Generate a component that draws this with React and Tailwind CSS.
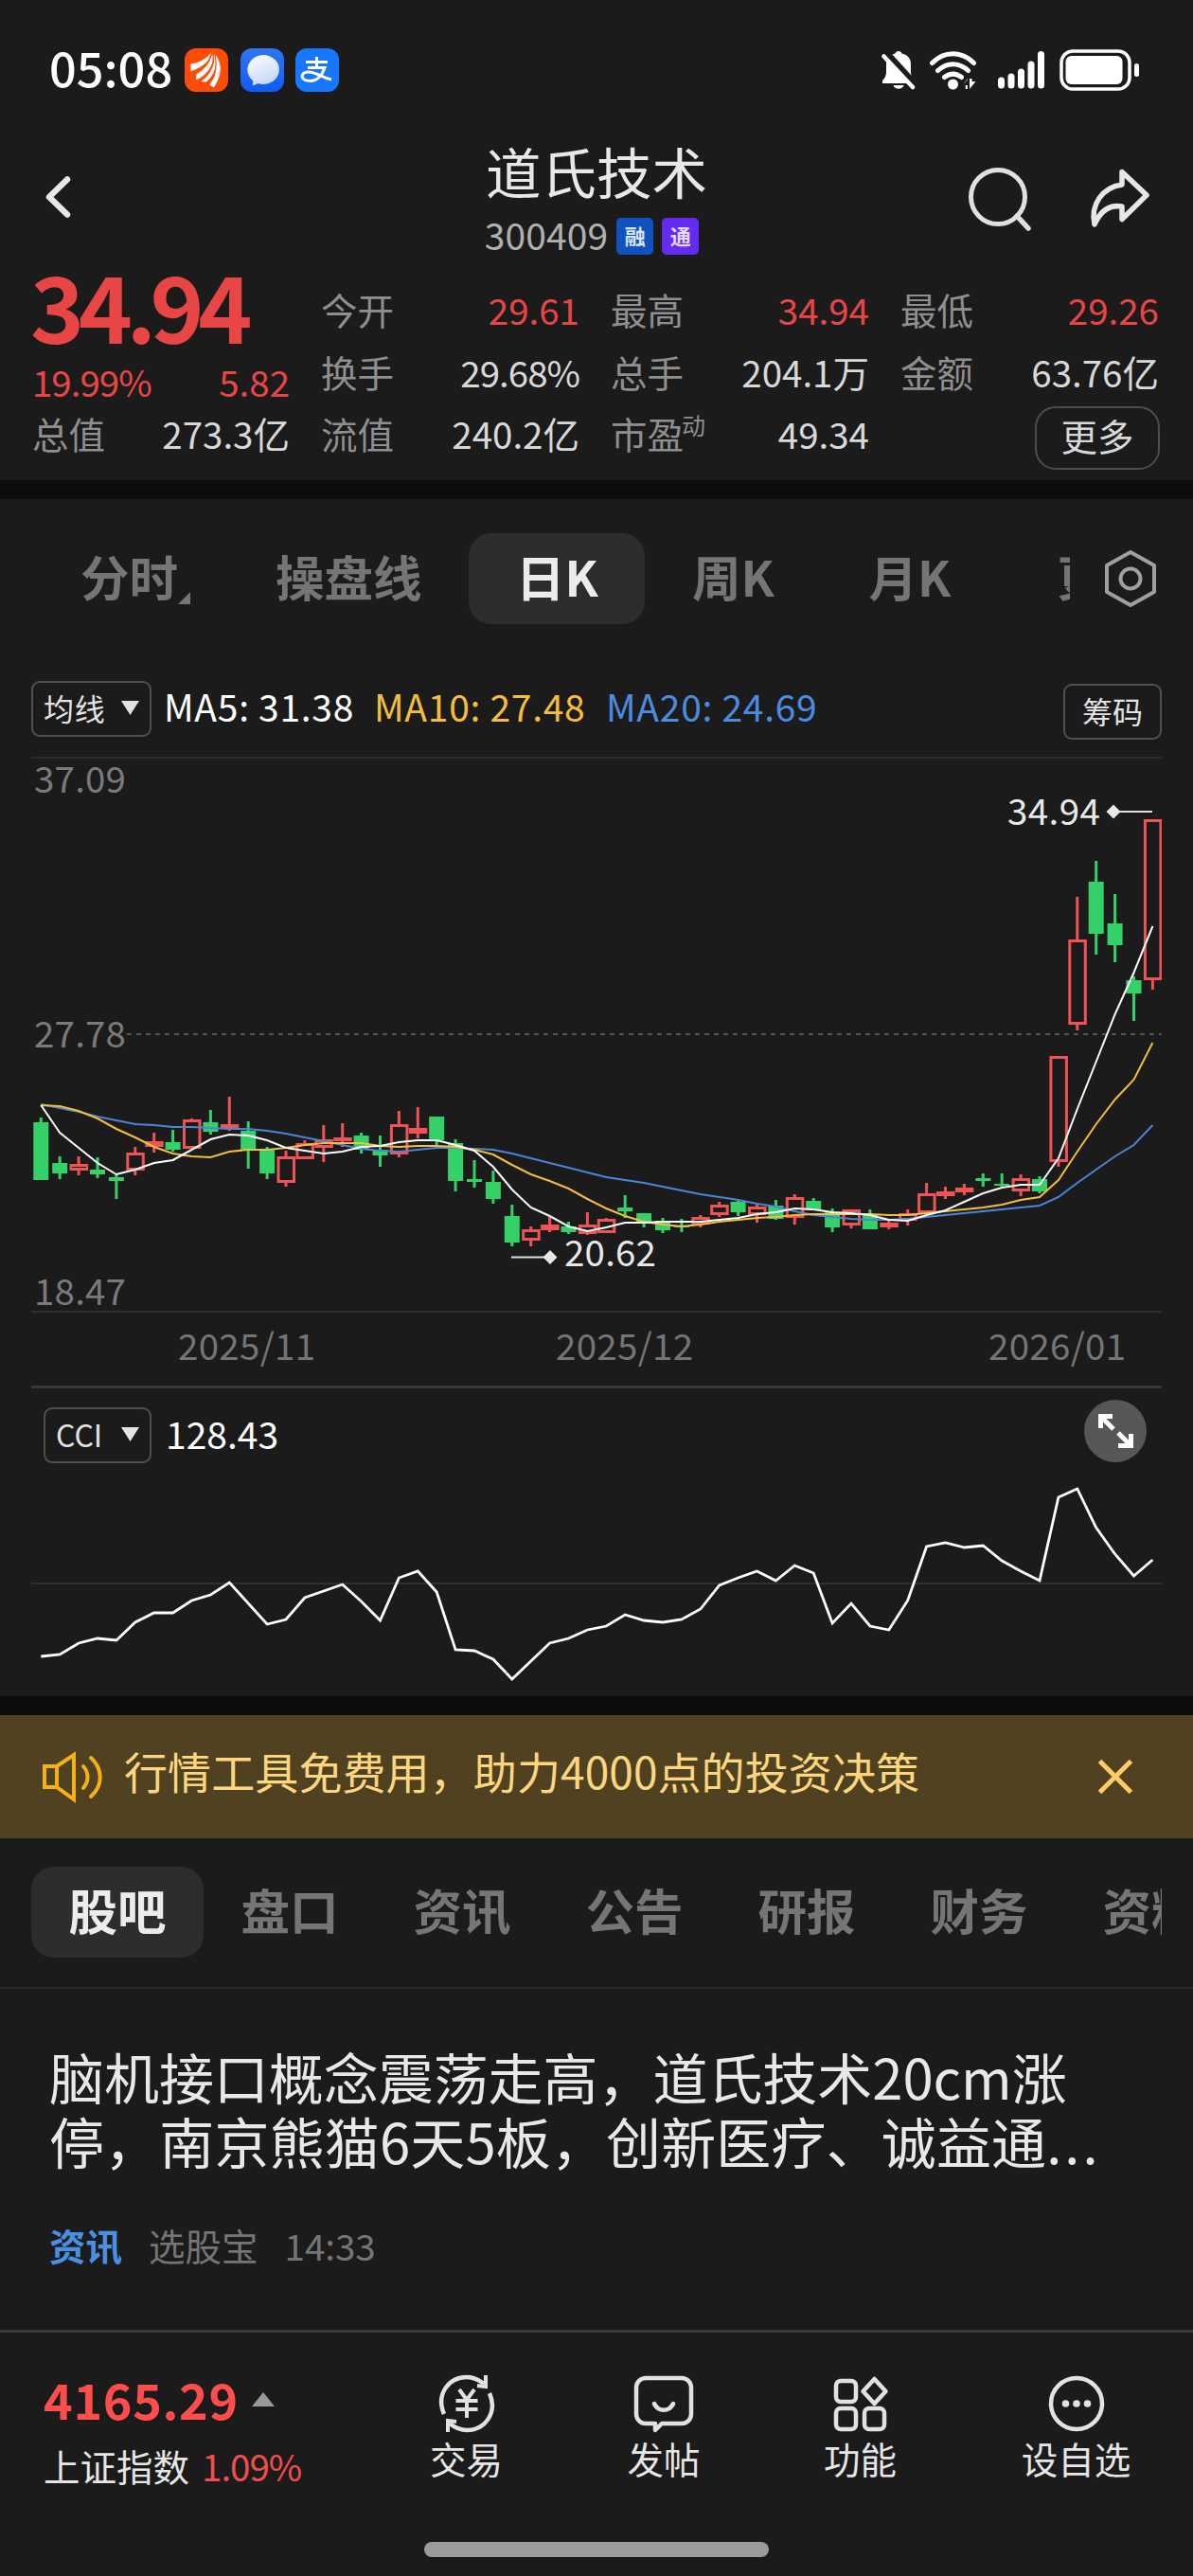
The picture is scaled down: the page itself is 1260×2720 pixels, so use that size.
import React, { useState } from "react";

// [high, body top, body bottom, low, rising]
const CANDLES = [
  [380, 385, 446, 446, 0], [421, 428, 439, 445, 0], [421, 429, 436, 441, 1], [422, 435, 440, 444, 0],
  [440, 443, 447, 466, 0], [411, 417, 436, 441, 1], [396, 405, 411, 417, 1], [393, 406, 414, 416, 0],
  [381, 382, 413, 413, 1], [372, 385, 395, 398, 0], [358, 387, 391, 394, 1], [384, 394, 414, 434, 0],
  [411, 414, 439, 445, 0], [415, 421, 449, 453, 1], [404, 407, 424, 424, 1], [388, 403, 412, 427, 1],
  [386, 401, 405, 411, 1], [396, 399, 414, 418, 0], [399, 414, 420, 432, 0], [373, 387, 419, 422, 1],
  [369, 391, 397, 402, 1], [379, 379, 404, 409, 0], [403, 407, 447, 458, 0], [425, 445, 448, 454, 0],
  [436, 448, 466, 471, 0], [472, 484, 512, 516, 0], [495, 498, 510, 516, 1], [484, 493, 499, 501, 1],
  [490, 495, 501, 503, 0], [480, 493, 503, 504, 1], [486, 487, 502, 502, 1], [462, 475, 479, 486, 0],
  [481, 481, 492, 496, 0], [486, 489, 499, 502, 0], [487, 494, 496, 501, 0], [483, 485, 493, 496, 1],
  [469, 472, 483, 485, 1], [468, 469, 480, 484, 0], [472, 474, 483, 491, 1], [467, 473, 487, 488, 0],
  [461, 464, 486, 493, 1], [465, 468, 478, 478, 0], [476, 480, 496, 501, 0], [477, 477, 494, 497, 1],
  [477, 483, 498, 498, 0], [489, 491, 496, 498, 1], [477, 481, 489, 494, 1], [449, 460, 481, 481, 1],
  [453, 458, 463, 466, 1], [450, 454, 459, 462, 1], [439, 444, 447, 453, 0], [439, 450, 452, 454, 0],
  [440, 444, 458, 463, 1], [442, 445, 458, 460, 0], [315, 315, 427, 432, 1], [147, 192, 282, 288, 1],
  [109, 131, 186, 208, 0], [144, 175, 198, 216, 0], [231, 235, 249, 278, 0], [65, 65, 235, 245, 1],
];

const MA5 = [367, 396, 412, 428, 440, 435, 428, 425, 414, 403, 398, 399, 404, 412, 415, 418, 416, 411, 410, 406, 404, 404, 409, 415, 432, 456, 475, 484, 495, 500, 496, 491, 491, 490, 490, 490, 488, 486, 482, 480, 476, 477, 480, 481, 483, 488, 489, 483, 478, 469, 460, 454, 451, 451, 423, 371, 321, 271, 227, 178];
const MA10 = [367, 368, 373, 381, 392, 401, 411, 418, 421, 422, 416, 414, 414, 412, 409, 407, 407, 407, 410, 411, 410, 410, 411, 414, 419, 430, 440, 447, 455, 466, 476, 484, 490, 493, 495, 493, 490, 488, 486, 485, 483, 482, 482, 482, 482, 483, 483, 481, 479, 477, 475, 472, 467, 464, 446, 416, 387, 361, 340, 301];
const MA20 = [366, 370, 374, 379, 383, 387, 388, 390, 390, 391, 392, 392, 394, 397, 401, 405, 409, 413, 415, 416, 414, 412, 412, 413, 414, 418, 423, 428, 433, 438, 443, 446, 449, 453, 457, 461, 464, 467, 471, 474, 479, 483, 485, 487, 488, 488, 487, 485, 483, 481, 479, 477, 475, 473, 464, 449, 435, 421, 409, 388];
const CCI = [189, 187, 175, 170, 172, 153, 143, 143, 130, 124, 111, 133, 155, 150, 127, 120, 113, 131, 151, 106, 99, 121, 182, 183, 192, 213, 194, 175, 170, 161, 157, 145, 151, 153, 150, 139, 114, 106, 99, 109, 93, 101, 154, 133, 157, 161, 130, 73, 69, 74, 72, 88, 99, 109, 21, 12, 53, 81, 104, 87];

const QUOTES = [
  [["今开", "29.61", true], ["换手", "29.68%"], ["流值", "240.2亿"]],
  [["最高", "34.94", true], ["总手", "204.1万"], ["市盈", "49.34"]],
  [["最低", "29.26", true], ["金额", "63.76亿"]],
];

const INFO_TABS = ["股吧", "盘口", "资讯", "公告", "研报", "财务", "资料"];

const xAt = (i) => 10.3 + i * 19.9;
const toPoints = (values) => values.map((v, i) => `${xAt(i).toFixed(1)},${v}`).join(" ");

function StatusBar() {
  return (
    <div className="h-[147px] pl-[52px] pr-[55px] flex items-center justify-between">
      <div className="flex items-center">
        <span className="w-[143px] text-[50.500px] leading-none font-medium text-white pb-[6px]">05:08</span>
        <div className="flex gap-[12.5px]">
          <svg className="w-[46px] h-[46px]" viewBox="0 0 46 46">
            <rect width="46" height="46" rx="12" fill="#fd4c07" />
            <g fill="#fff" stroke="#fd4c07" strokeWidth="1">
              <path d="M6 25V16C16 15 22 11 28 4c0 8-7 16-22 21z" />
              <path d="M12 34c-1-2-.5-4 0-7C21 22 27 15 29 4c4 11-3 24-17 30z" />
              <path d="M23 36c-2 0-4 0-6-1C28 27 32 17 30.500 4c6 11 2 24-7.500 32z" />
              <path d="M26 38c8-9 8-21 6-33 9 12 8 23-1 37-1-1-4-2-5-4z" />
            </g>
          </svg>
          <svg className="w-[46px] h-[46px]" viewBox="0 0 46 46">
            <defs>
              <linearGradient id="msgBg" x1="0" y1="0" x2="0" y2="1">
                <stop offset="0" stopColor="#2f76f3" />
                <stop offset="1" stopColor="#0f5cf5" />
              </linearGradient>
              <linearGradient id="msgBubble" x1="0" y1="0" x2="0.5" y2="1">
                <stop offset="0" stopColor="#fff" />
                <stop offset="1" stopColor="#c8d8fa" />
              </linearGradient>
            </defs>
            <rect width="46" height="46" rx="12" fill="url(#msgBg)" />
            <path d="M23 7a17 15.500 0 1 1-5 30c-1 1-3 2-5.500 2 .8-1.500 1-3 .5-5A17 15.500 0 0 1 23 7z" fill="url(#msgBubble)" />
          </svg>
          <svg className="w-[46px] h-[46px]" viewBox="0 0 46 46" fill="none" stroke="#fff" strokeWidth="3">
            <rect width="46" height="46" rx="12" fill="#1777ff" stroke="none" />
            <path d="M11 14.500h23M22.500 9v11M13 20.500h18c-3 8-8 14-15 14-12 0-11-10-2-9.500 9 .5 14 6 24 8" />
          </svg>
        </div>
      </div>
      <div className="flex items-center">
        <svg className="w-[36px] h-[42px]" viewBox="0 0 36 42">
          <path d="M18 1c2 0 3 1 3.500 2.500C28 5 31 9 31 15v7c0 5 1 7 4 10v3H1v-3c3-3 4-5 4-10v-7c0-6 3-10 9.500-11.500C15 2 16 1 18 1z" fill="#fff" />
          <path d="M12.500 37h11c-1 5-10 5-11 0z" fill="#fff" />
          <path d="M6 3l31 34" stroke="#1b1b1b" strokeWidth="6" />
          <path d="M2.500 6.500L33 39" stroke="#fff" strokeWidth="4.500" strokeLinecap="round" />
        </svg>
        <svg className="ml-[14px] w-[52px] h-[42px]" viewBox="0 0 52 42" fill="none" stroke="#fff" strokeWidth="5" strokeLinecap="round">
          <path d="M3.500 13.500c13-13 31-13 44 0M9.500 21.500c10-9 22-9 32 0M16.500 28.500c6-4.500 12-4.500 18 0" />
          <circle cx="25.500" cy="36" r="5.500" fill="#fff" stroke="none" />
          <path d="M36 37h4.800V30zM36 37l4.800-6v10h-2v-4zM43 30v11l6.500-8h-4v-3z" fill="#fff" stroke="none" />
        </svg>
        <svg className="ml-[21px] w-[50px] h-[42px]" viewBox="0 0 50 42" stroke="#fff" strokeWidth="7" strokeLinecap="round">
          <path d="M3.500 32v5M14 28v9M24.500 23v14M35 15v22M45.500 4.500v32.500" />
        </svg>
        <svg className="ml-[15px] w-[86px] h-[44px]" viewBox="0 0 86 44">
          <rect x="2" y="2" width="72" height="40" rx="12" fill="none" stroke="#fff" strokeWidth="3.500" />
          <rect x="6.500" y="7" width="60" height="30" rx="6" fill="#fff" />
          <rect x="79" y="15" width="5" height="14" rx="2.500" fill="#fff" />
        </svg>
      </div>
    </div>
  );
}

function Header() {
  return (
    <div className="h-[133px] px-[46px] flex justify-between">
      <div className="w-[200px] pt-[37px]">
        <svg className="w-[30px] h-[48px]" viewBox="0 0 30 48" fill="none" stroke="#e8e8e8" strokeWidth="6.500" strokeLinecap="round" strokeLinejoin="round">
          <path d="M25 5.500L6 24l19 18.500" />
        </svg>
      </div>
      <div className="flex flex-col items-center">
        <h1 className="text-[58.500px] leading-[66px] text-[#e8e8e8]">道氏技术</h1>
        <div className="mt-[11px] pr-[10px] flex items-center text-[#b0b0b0]">
          <span className="text-[39px] leading-[44px] mr-[9px] tracking-[0.100px]">300409</span>
          <span className="mt-[6px] mr-[9px] w-[39px] h-[39px] rounded-[5px] bg-[#1052bf] text-[#dbe8ff] text-[22px] leading-[36px] font-bold text-center">融</span>
          <span className="mt-[6px] w-[39px] h-[39px] rounded-[5px] bg-[#632cf0] text-[#e3d9ff] text-[22px] leading-[36px] font-bold text-center">通</span>
        </div>
      </div>
      <div className="w-[200px] pt-[28px] flex justify-end gap-[59px]">
        <svg className="w-[70px] h-[70px] -ml-[1px]" viewBox="0 0 70 70" fill="none" stroke="#e0e0e0" strokeWidth="5">
          <circle cx="34" cy="33" r="28.500" />
          <path d="M54 53l12 13" strokeWidth="5.500" strokeLinecap="round" />
        </svg>
        <svg className="-mr-[1px] w-[66px] h-[70px]" viewBox="0 0 66 70" fill="none" stroke="#e6e6e6" strokeWidth="5.500" strokeLinejoin="round">
          <path d="M36 6.500l26 24.500-26 25.500V43C23 41 13 48 7 62c-4.500-21 8-39 29-42z" />
        </svg>
      </div>
    </div>
  );
}

function QuotePanel() {
  return (
    <div className="h-[227px] pl-[34px] flex gap-[33px] text-[38.500px] leading-none text-[#d8d8d8]">
      <div className="w-[272px] flex flex-col text-[#e84645]">
        <div className="h-[95px] -ml-[2px] text-[97px] leading-[82px] font-bold tracking-[-6.500px]">34.94</div>
        <div className="h-[49px] flex items-center justify-between pt-[6px]">
          <span className="tracking-[-1px]">19.99%</span>
          <span>5.82</span>
        </div>
        <div className="h-[66px] flex items-center justify-between text-[#d8d8d8]">
          <span className="text-[#8f8f8f]">总值</span>
          <span>273.3亿</span>
        </div>
      </div>
      {QUOTES.map((rows, i) => (
        <div key={i} className="w-[273px] pt-[14px]">
          {rows.map(([label, value, up]) => (
            <div key={label} className="h-[65.300px] flex items-center justify-between">
              <span className="text-[#8f8f8f] flex">
                {label}
                {label === "市盈" && <sup className="text-[25px] top-0 -ml-[2px] leading-[20px]">动</sup>}
              </span>
              <span className={up ? "text-[#e84645]" : value.endsWith("%") ? "tracking-[-1px]" : ""}>{value}</span>
            </div>
          ))}
          {i === 2 && (
            <div className="flex justify-end pt-[4px] -mr-[1px]">
              <button className="w-[132px] h-[67px] rounded-[22px] border-2 border-[#4d4d4d] pb-[6px]">更多</button>
            </div>
          )}
        </div>
      ))}
    </div>
  );
}

function PeriodTabs() {
  return (
    <div className="pt-[36px] flex items-center">
      <div className="w-[1130px] pl-[36px] flex overflow-hidden whitespace-nowrap text-[51.500px] leading-[90px] font-bold text-[#757575]">
        <div className="pl-[49px] pr-[52px] flex shrink-0">
          分时
          <svg className="w-[13px] h-[13px] -mr-[13px] mt-[62px]" viewBox="0 0 13 13" fill="#757575">
            <path d="M13 0v13H0z" />
          </svg>
        </div>
        <div className="pl-[51px] pr-[49px] shrink-0">操盘线</div>
        <div className="w-[186px] h-[96px] pl-[2px] text-center shrink-0 rounded-[24px] bg-[#2d2d2d] text-[#ececec]">日K</div>
        <div className="w-[187px] pl-[1px] text-center shrink-0">周K</div>
        <div className="w-[187px] text-center shrink-0">月K</div>
        <div className="pl-[62px] shrink-0">更多</div>
      </div>
      <svg className="ml-[35px] w-[58px] h-[62px]" viewBox="0 0 58 62" fill="none" stroke="#a0a0a0" strokeWidth="4">
        <path d="M29 3l25 14v28L29 59 4 45V17z" strokeLinejoin="round" />
        <circle cx="29" cy="31" r="10.500" />
      </svg>
    </div>
  );
}

function Dropdown({ label }) {
  return (
    <button className="h-[59px] px-[11px] rounded-[9px] border-2 border-[#505050] flex items-center text-[32px] leading-none text-[#e3e3e3]">
      <span className="pb-[4px]">{label}</span>
      <svg className="ml-auto mb-[2px] w-[19px] h-[15px]" viewBox="0 0 19 15" fill="#e3e3e3">
        <path d="M0 0h19L9.500 15z" />
      </svg>
    </button>
  );
}

function KLineChart() {
  return (
    <div className="mx-[33px] mt-[18px] h-[585px] relative border-t-2 border-[#2c2c2c] text-[38.500px] leading-none tracking-[0.200px] text-[#7a7a7a]">
      <svg className="w-[1194px] h-[584px] -mt-[1px] block" viewBox="0 0 1194 584" fill="none">
        <path d="M101 292h1093" stroke="#555" strokeWidth="2" strokeDasharray="5 5" />
        {CANDLES.map(([high, top, bottom, low, rising], i) => {
          const x = xAt(i);
          if (rising) {
            return (
              <g key={i} stroke="#f05355" strokeWidth="3">
                <path d={`M${x} ${high}V${top}M${x} ${bottom}V${low}`} />
                <rect x={x - 8} y={top + 1.5} width="16.500" height={Math.max(bottom - top - 3, 1)} />
              </g>
            );
          }
          return (
            <g key={i} fill="#33d168">
              <rect x={x - 1.5} y={high} width="3" height={low - high} />
              <rect x={x - 8} y={top} width="16" height={bottom - top} />
            </g>
          );
        })}
        <polyline points={toPoints(MA20)} stroke="#4a86d8" strokeWidth="2" />
        <polyline points={toPoints(MA10)} stroke="#f3bd3d" strokeWidth="2" />
        <polyline points={toPoints(MA5)} stroke="#fff" strokeWidth="2" />
        <path d="M507 527.500h38M1147 57h37" stroke="#e0e0e0" strokeWidth="2" />
        <path d="M548 520l7.500 7.500-7.500 7.500-7.500-7.500zM1143 49.500l7.500 7.500-7.500 7.500-7.500-7.500z" fill="#e8e8e8" />
      </svg>
      {/* axis and callout labels */}
      <span className="absolute left-[3px] top-[0px]">37.09</span>
      <span className="absolute left-[3px] top-[269px] bg-[#1b1b1b]">27.78</span>
      <span className="absolute left-[3px] bottom-[4px]">18.47</span>
      <span className="absolute left-[1031px] top-[34px] tracking-[0.400px] text-[#e8e8e8]">34.94</span>
      <span className="absolute left-[563px] top-[500px] text-[#e8e8e8]">20.62</span>
    </div>
  );
}

function CciChart() {
  return (
    <div className="mx-[33px] h-[328px] border-t-[3px] border-[#383838]">
      <div className="h-[94px] flex pl-[13px] pr-[16px]">
        <div className="mt-[20px] w-[114px] grid h-[59px]">
          <Dropdown label="CCI" />
        </div>
        <span className="ml-[15px] mt-[28px] text-[39px] leading-none text-white">128.43</span>
        <div className="ml-auto mt-[12px] w-[66px] h-[66px] rounded-full bg-[#575757]">
          <svg className="w-[66px] h-[66px]" viewBox="0 0 66 66" fill="none" stroke="#fff" strokeWidth="5">
            <path d="M17.500 30V17.500H30M18 18l13 13M49.500 36v12.500H36M49 48L36 35" />
          </svg>
        </div>
      </div>
      <svg className="w-[1194px] h-[229px] block" viewBox="0 0 1194 229" fill="none">
        <path d="M0 112h1194" stroke="#2e2e2e" strokeWidth="2" />
        <polyline points={toPoints(CCI)} stroke="#fff" strokeWidth="2.800" />
      </svg>
    </div>
  );
}

function Banner({ onClose }) {
  return (
    <div className="h-[130px] bg-[#504220] pl-[44px] pr-[61px] flex items-center">
      <svg className="w-[65px] h-[56px]" viewBox="0 0 65 56" fill="none" stroke="#f7b114" strokeWidth="4">
        <path d="M3 17h13L34 5v47L16 39H3zM16 17v22" />
        <path d="M44 17c6 7 6 16 0 23M52 8c13 12 13 29 0 41" strokeLinecap="round" />
      </svg>
      <span className="ml-[22px] pb-[14px] text-[46px] leading-none tracking-[0.100px] text-[#fcd780]">行情工具免费用，助力4000点的投资决策</span>
      <button className="ml-auto" onClick={onClose}>
        <svg className="w-[42px] h-[42px]" viewBox="0 0 42 42" stroke="#ffcc66" strokeWidth="5">
          <path d="M4.500 4.500l33 33M37.500 4.500l-33 33" />
        </svg>
      </button>
    </div>
  );
}

function BottomBar() {
  return (
    <div className="h-[260px] border-t-[3px] border-[#393939]">
      <div className="h-[221px] flex leading-none text-[38.500px] text-[#e6e6e6]">
        <div className="w-[386px] pl-[46px] pt-[44px]">
          <div className="flex items-center text-[52px] tracking-[0.700px] font-bold text-[#ff4d4c]">
            4165.29
            <svg className="ml-[14px] w-[24px] h-[15px]" viewBox="0 0 24 15" fill="#999">
              <path d="M12 0l12 15H0z" />
            </svg>
          </div>
          <div className="mt-[25px] whitespace-nowrap">
            上证指数<span className="ml-[13px] tracking-[-1px] text-[#f04d4c]">1.09%</span>
          </div>
        </div>
        <div className="w-[213px] pt-[43px] flex flex-col items-center">
          <svg className="w-[64px] h-[64px]" viewBox="0 0 64 64" fill="none" stroke="#e2e2e2" strokeWidth="4.500">
            <path d="M8 43C-1 22 13 4 32 4c7 0 13 3 18 7M56 21c9 21-5 39-24 39-7 0-13-3-18-7" />
            <path d="M52 2v12l-9-1M12 62V50l9 1" strokeWidth="4" />
            <path d="M24 17l8 11 8-11M20.500 29h23M20.500 38h23M32 28v19" strokeWidth="4" />
          </svg>
          <span className="mt-[6px]">交易</span>
        </div>
        <div className="w-[204px] pt-[43px] flex flex-col items-center">
          <svg className="w-[64px] h-[64px]" viewBox="0 0 64 64" fill="none" stroke="#e2e2e2" strokeWidth="4.500" strokeLinejoin="round">
            <path d="M13 5h38a10 10 0 0 1 10 10v28a10 10 0 0 1-10 10H30l-7 7v-7H13A10 10 0 0 1 3 43V15A10 10 0 0 1 13 5z" />
            <path d="M22 32c4 9 16 9 20 0" strokeLinecap="round" />
          </svg>
          <span className="mt-[6px]">发帖</span>
        </div>
        <div className="w-[211px] pt-[43px] flex flex-col items-center">
          <svg className="w-[64px] h-[64px]" viewBox="0 0 64 64" fill="none" stroke="#e2e2e2" strokeWidth="4.500" strokeLinejoin="round">
            <rect x="6" y="8" width="21" height="22" rx="5" />
            <rect x="6" y="37" width="21" height="22" rx="5" />
            <rect x="36" y="37" width="21" height="22" rx="5" />
            <path d="M46.500 6l12 13-12 13-12-13z" />
          </svg>
          <span className="mt-[6px]">功能</span>
        </div>
        <div className="w-[245px] pt-[43px] flex flex-col items-center">
          <svg className="w-[64px] h-[64px]" viewBox="0 0 64 64" fill="#e2e2e2">
            <circle cx="32" cy="32" r="27" fill="none" stroke="#e2e2e2" strokeWidth="4.500" />
            <circle cx="20.500" cy="32" r="3.800" />
            <circle cx="32" cy="32" r="3.800" />
            <circle cx="43.500" cy="32" r="3.800" />
          </svg>
          <span className="mt-[6px]">设自选</span>
        </div>
      </div>
      <div className="mx-auto w-[364px] h-[16px] rounded-full bg-[#9b9b9b]" />
    </div>
  );
}

export default function App() {
  const [showBanner, setShowBanner] = useState(true);

  return (
    <div className="w-[1260px] h-[2720px] overflow-hidden bg-[#1b1b1b] font-['Noto_Sans_CJK_SC','Noto_Sans',sans-serif]">
      <StatusBar />
      <Header />
      <QuotePanel />
      <div className="h-[20px] bg-[#0d0d0d]" />

      <PeriodTabs />

      <div className="mt-[60px] h-[62px] px-[33px] flex items-start text-[39px] leading-[53px] tracking-[0.700px]">
        <div className="w-[127px] grid">
          <Dropdown label="均线" />
        </div>
        <span className="ml-[13px] w-[222px] text-white">MA5: 31.38</span>
        <span className="w-[245px] text-[#f6bd3c]">MA10: 27.48</span>
        <span className="text-[#4a8ce0]">MA20: 24.69</span>
        <button className="ml-auto mt-[3px] w-[104px] h-[59px] rounded-[9px] border-2 border-[#505050] text-[32px] leading-[48px] pb-[3px] tracking-normal text-[#e3e3e3]">筹码</button>
      </div>

      <KLineChart />
      <div className="mx-[33px] h-[79px] border-t-2 border-[#2e2e2e] relative text-[38.500px] leading-[67px] tracking-[0.300px] text-[#757575]">
        <span className="absolute left-[155px]">2025/11</span>
        <span className="absolute left-[554px]">2025/12</span>
        <span className="absolute left-[1011px]">2026/01</span>
      </div>
      <CciChart />
      <div className="h-[20px] bg-[#0d0d0d]" />

      {showBanner && <Banner onClose={() => setShowBanner(false)} />}

      <div className="h-[159px] mx-[33px] pt-[30px] flex overflow-hidden text-[51.500px] leading-[90px] font-bold text-[#757575]">
        {INFO_TABS.map((tab, i) => (
          <div
            key={tab}
            className={
              i === 0
                ? "w-[182px] h-[96px] shrink-0 text-center rounded-[24px] bg-[#2d2d2d] text-[#ececec]"
                : "w-[182px] h-[96px] shrink-0 text-center"
            }
          >
            {tab}
          </div>
        ))}
      </div>

      <div className="h-[362px] border-t-2 mt-[-2px] border-[#2a2a2a] px-[52px] pt-[58px]">
        <div className="text-[58px] leading-[68px] text-[#e8e8e8] whitespace-nowrap">
          <p className="tracking-[-0.050px]">脑机接口概念震荡走高，道氏技术20cm涨</p>
          <p className="tracking-[0.150px]">
            停，南京熊猫6天5板，创新医疗、诚益通<span className="tracking-[3px]">...</span>
          </p>
        </div>
        <div className="mt-[54px] flex items-center text-[38.500px] leading-[44px] text-[#757575]">
          <span className="font-bold text-[#4a90e2]">资讯</span>
          <span className="ml-[28px]">选股宝</span>
          <span className="ml-[28px]">14:33</span>
        </div>
      </div>

      <BottomBar />
    </div>
  );
}
